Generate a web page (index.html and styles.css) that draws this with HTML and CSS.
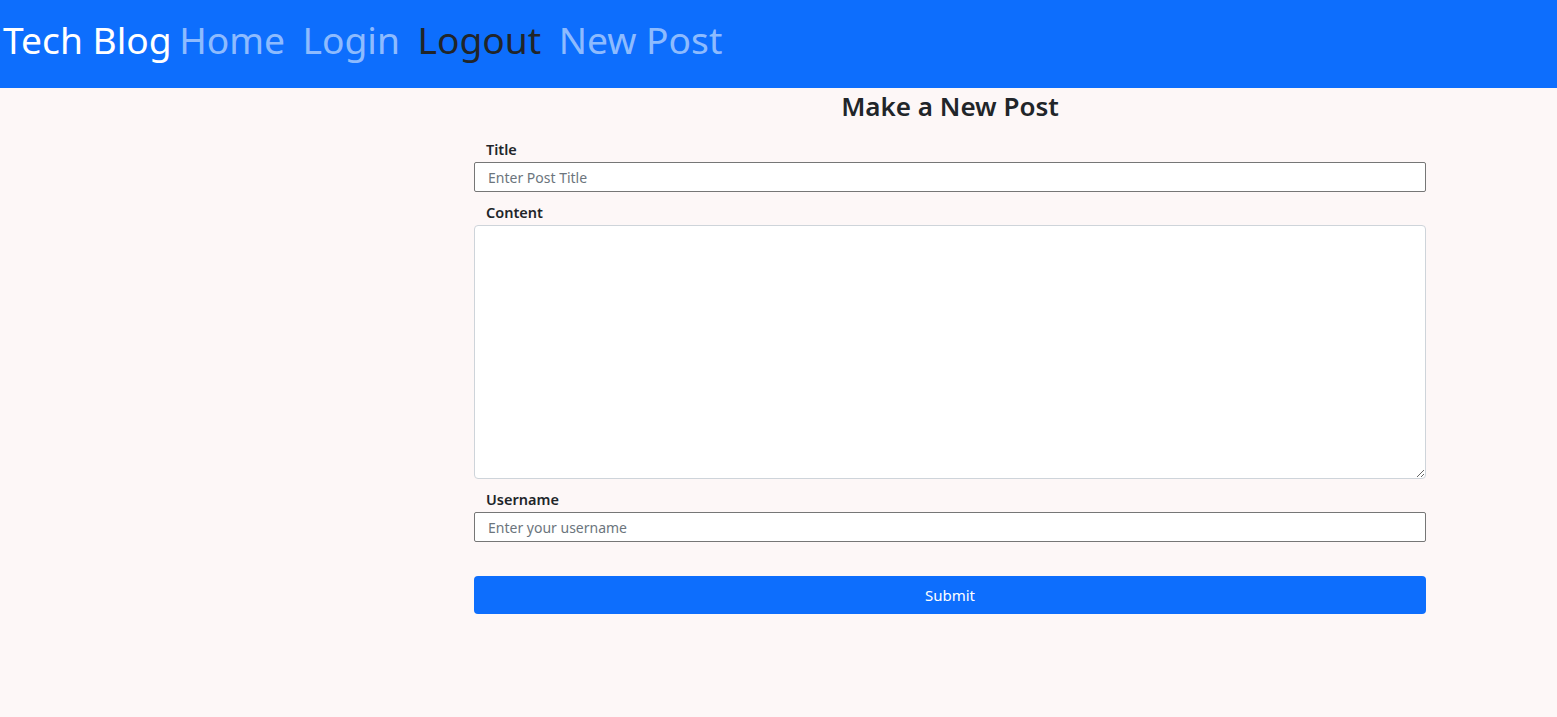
FILE: index.html
```html
<!DOCTYPE html>
<html lang="en">
<head>
<meta charset="utf-8">
<title>Tech Blog</title>
<link rel="stylesheet" href="styles.css">
</head>
<body>
<nav class="navbar">
  <a class="brand" href="#">Tech Blog</a>
  <a class="nav-link" href="#">Home</a>
  <a class="nav-link" href="#">Login</a>
  <a class="nav-link active" href="#">Logout</a>
  <a class="nav-link" href="#">New Post</a>
</nav>
<main class="page">
  <form class="post-form">
    <h2 class="form-title">Make a New Post</h2>
    <label class="field-label" for="title">Title</label>
    <input class="field-input" id="title" type="text" placeholder="Enter Post Title">
    <label class="field-label" for="content">Content</label>
    <textarea class="field-area" id="content"></textarea>
    <label class="field-label" for="username">Username</label>
    <input class="field-input" id="username" type="text" placeholder="Enter your username">
    <button class="submit-btn" type="button">Submit</button>
  </form>
</main>
</body>
</html>
```
FILE: styles.css
```css
* { box-sizing: border-box; }
html, body { margin: 0; padding: 0; }
body {
  background: #fdf7f7;
  font-family: "Noto Sans", "Open Sans", sans-serif;
  color: #212529;
  min-height: 717px;
}
.navbar {
  background: #0d6efd;
  height: 88px;
  display: flex;
  align-items: center;
  gap: 17.5px;
  padding: 0 0 9px 3px;
}
.navbar a { text-decoration: none; font-size: 37.2px; line-height: 1; }
.brand { color: #fff; margin-right: -10px; }
.nav-link { color: rgba(255,255,255,0.55); }
.nav-link.active { color: #212529; }
.page {
  display: flex;
  padding-left: 474px;
}
.post-form {
  width: 952px;
  display: flex;
  flex-direction: column;
}
.form-title {
  text-align: center;
  font-size: 26px;
  font-weight: 600;
  margin: 2px 0 18px;
  line-height: 32px;
}
.field-label {
  font-size: 14.5px;
  font-weight: 600;
  padding-left: 12px;
  line-height: 18px;
  margin-bottom: 4px;
}
.field-input {
  height: 30px;
  border: 1px solid #767676;
  border-radius: 2px;
  background: #fff;
  padding: 0 13px;
  font-family: inherit;
  font-size: 14px;
  color: #212529;
  margin-bottom: 11px;
}
.field-input::placeholder { color: #6c757d; }
.field-area {
  height: 254px;
  border: 1px solid #ced4da;
  border-radius: 4px;
  background: #fff;
  font-family: inherit;
  margin-bottom: 11px;
  resize: vertical;
}
.submit-btn {
  margin-top: 23px;
  height: 38px;
  border: none;
  border-radius: 4px;
  background: #0d6efd;
  color: #fff;
  font-family: inherit;
  font-size: 15px;
}
```
